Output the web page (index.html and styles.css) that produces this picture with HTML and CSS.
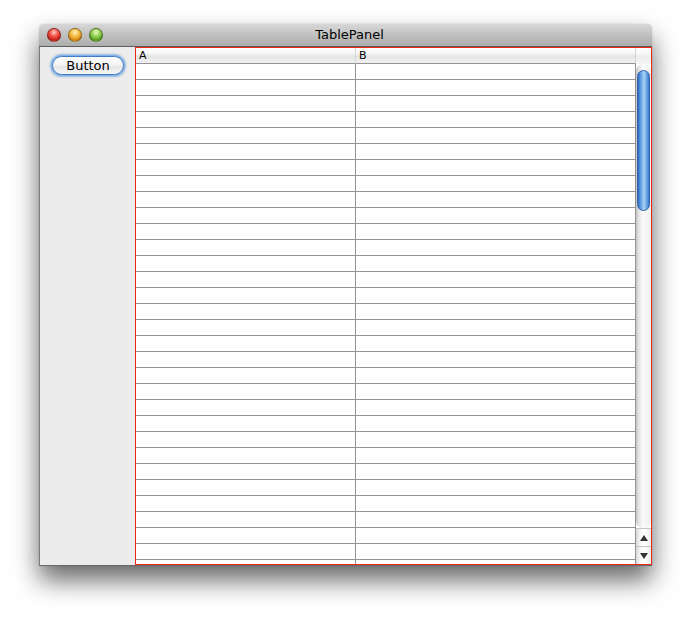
FILE: index.html
```html
<!DOCTYPE html>
<html lang="en">
<head>
  <meta charset="UTF-8">
  <meta name="viewport" content="width=device-width, initial-scale=1.0">
  <title>TablePanel</title>
  <link rel="stylesheet" href="styles.css">
</head>
<body>
  <div class="desktop">
    <div class="window">
      <header class="titlebar">
        <div class="lights">
          <span class="light light--close"></span>
          <span class="light light--min"></span>
          <span class="light light--zoom"></span>
        </div>
        <h1 class="titlebar__title">TablePanel</h1>
        <div></div>
      </header>
      <div class="window__body">
        <aside class="side">
          <button class="btn" type="button">Button</button>
        </aside>
        <div class="scroll-pane">
          <div class="table-view">
            <table class="grid">
              <thead>
                <tr><th>A</th><th>B</th></tr>
              </thead>
              <tbody>
                <tr><td></td><td></td></tr>
                <tr><td></td><td></td></tr>
                <tr><td></td><td></td></tr>
                <tr><td></td><td></td></tr>
                <tr><td></td><td></td></tr>
                <tr><td></td><td></td></tr>
                <tr><td></td><td></td></tr>
                <tr><td></td><td></td></tr>
                <tr><td></td><td></td></tr>
                <tr><td></td><td></td></tr>
                <tr><td></td><td></td></tr>
                <tr><td></td><td></td></tr>
                <tr><td></td><td></td></tr>
                <tr><td></td><td></td></tr>
                <tr><td></td><td></td></tr>
                <tr><td></td><td></td></tr>
                <tr><td></td><td></td></tr>
                <tr><td></td><td></td></tr>
                <tr><td></td><td></td></tr>
                <tr><td></td><td></td></tr>
                <tr><td></td><td></td></tr>
                <tr><td></td><td></td></tr>
                <tr><td></td><td></td></tr>
                <tr><td></td><td></td></tr>
                <tr><td></td><td></td></tr>
                <tr><td></td><td></td></tr>
                <tr><td></td><td></td></tr>
                <tr><td></td><td></td></tr>
                <tr><td></td><td></td></tr>
                <tr><td></td><td></td></tr>
                <tr><td></td><td></td></tr>
                <tr><td></td><td></td></tr>
              </tbody>
            </table>
          </div>
          <div class="scrollbar">
            <div class="scrollbar__corner"></div>
            <div class="scrollbar__track">
              <div class="scrollbar__thumb"></div>
            </div>
            <div class="scrollbar__btn">
              <svg width="8" height="6" viewBox="0 0 8 6"><polygon points="4,0 8,6 0,6" fill="#333"/></svg>
            </div>
            <div class="scrollbar__btn">
              <svg width="8" height="6" viewBox="0 0 8 6"><polygon points="0,0 8,0 4,6" fill="#333"/></svg>
            </div>
          </div>
        </div>
      </div>
    </div>
  </div>
</body>
</html>
```

FILE: styles.css
```css
* {
  margin: 0;
  padding: 0;
  box-sizing: border-box;
}

html,
body {
  height: 100%;
}

body {
  background: #fff;
  font-family: "DejaVu Sans", "Liberation Sans", sans-serif;
}

.desktop {
  height: 620px;
  padding: 24px 0 0 39px;
}

.window {
  width: 613px;
  border-radius: 5px 5px 0 0;
  box-shadow: 0 14px 26px rgba(0, 0, 0, 0.6), 0 0 1px rgba(0, 0, 0, 0.4);
}

.titlebar {
  display: grid;
  grid-template-columns: 1fr auto 1fr;
  align-items: center;
  height: 23px;
  padding-left: 8px;
  border-radius: 5px 5px 0 0;
  border-bottom: 1px solid #5c5c5c;
  background: linear-gradient(#d8d8d8, #c2c2c2 45%, #adadad);
}

.titlebar__title {
  font-size: 13px;
  font-weight: normal;
  color: #000;
  line-height: 22px;
}

.lights {
  display: flex;
  gap: 7px;
}

.light {
  display: block;
  width: 14px;
  height: 14px;
  border-radius: 50%;
  border: 1px solid rgba(0, 0, 0, 0.35);
}

.light--close {
  background: radial-gradient(circle at 50% 28%, #ffd0c8 0, #f4564a 38%, #c7231a 72%, #e8584c 100%);
}

.light--min {
  background: radial-gradient(circle at 50% 28%, #fff0c0 0, #f7c04a 38%, #d68816 72%, #f4b648 100%);
}

.light--zoom {
  background: radial-gradient(circle at 50% 28%, #e8f8c8 0, #98d45a 38%, #5a9e22 72%, #94cf54 100%);
}

.window__body {
  display: flex;
  height: 519px;
  border-left: 1px solid #7a7a7a;
  border-bottom: 1px solid #6a6a6a;
  background: #ececec;
}

.side {
  width: 95px;
  padding: 9px 0 0 12px;
}

.btn {
  display: block;
  width: 72px;
  height: 19px;
  border-radius: 10px;
  border: 1px solid #3f7cc4;
  box-shadow: 0 0 0 1px #7fb0e6, 0 0 2px 2px rgba(80, 145, 220, 0.55);
  background: linear-gradient(#fefefe, #f2f2f2 50%, #e4e4e4 55%, #f6f6f6);
  font-family: "DejaVu Sans", "Liberation Sans", sans-serif;
  font-size: 13px;
  color: #000;
  line-height: 17px;
}

.scroll-pane {
  display: flex;
  width: 517px;
  border: 1px solid #ee2414;
  background: #fff;
}

.table-view {
  width: 500px;
  overflow: hidden;
}

.grid {
  width: 500px;
  table-layout: fixed;
  border-collapse: separate;
  border-spacing: 0;
}

.grid th,
.grid td {
  height: 16px;
  padding: 0;
  border-bottom: 1px solid #939393;
  border-right: 1px solid #939393;
}

.grid th:first-child,
.grid td:first-child {
  width: 220px;
}

.grid th {
  padding-left: 3px;
  text-align: left;
  font-size: 11px;
  font-weight: normal;
  line-height: 15px;
  color: #000;
  border-right-color: #d4d4d4;
  background: linear-gradient(#fff, #f6f6f6 35%, #e4e4e4 55%, #f2f2f2);
}

.scrollbar {
  display: flex;
  flex-direction: column;
  width: 15px;
  background: #fff;
}

.scrollbar__corner {
  height: 16px;
  background: linear-gradient(#fff, #f6f6f6 35%, #ececec 55%, #f6f6f6);
}

.scrollbar__track {
  flex: 1;
  padding: 6px 1px 0 1px;
  border-radius: 7px;
  background: linear-gradient(90deg, #c4c4c4, #e6e6e6 3px, #fafafa 7px, #eeeeee);
}

.scrollbar__thumb {
  height: 141px;
  border-radius: 7px;
  border: 1px solid #3563a6;
  background: linear-gradient(90deg, #2e6bc2, #6fa8e8 30%, #a8d2f6 55%, #5a98e2 85%, #3a76c8);
}

.scrollbar__btn {
  display: flex;
  align-items: center;
  justify-content: center;
  height: 18px;
  border-top: 1px solid #c6c6c6;
  background: linear-gradient(90deg, #d8d8d8, #f6f6f6 4px, #fff 8px, #ececec);
}
```
